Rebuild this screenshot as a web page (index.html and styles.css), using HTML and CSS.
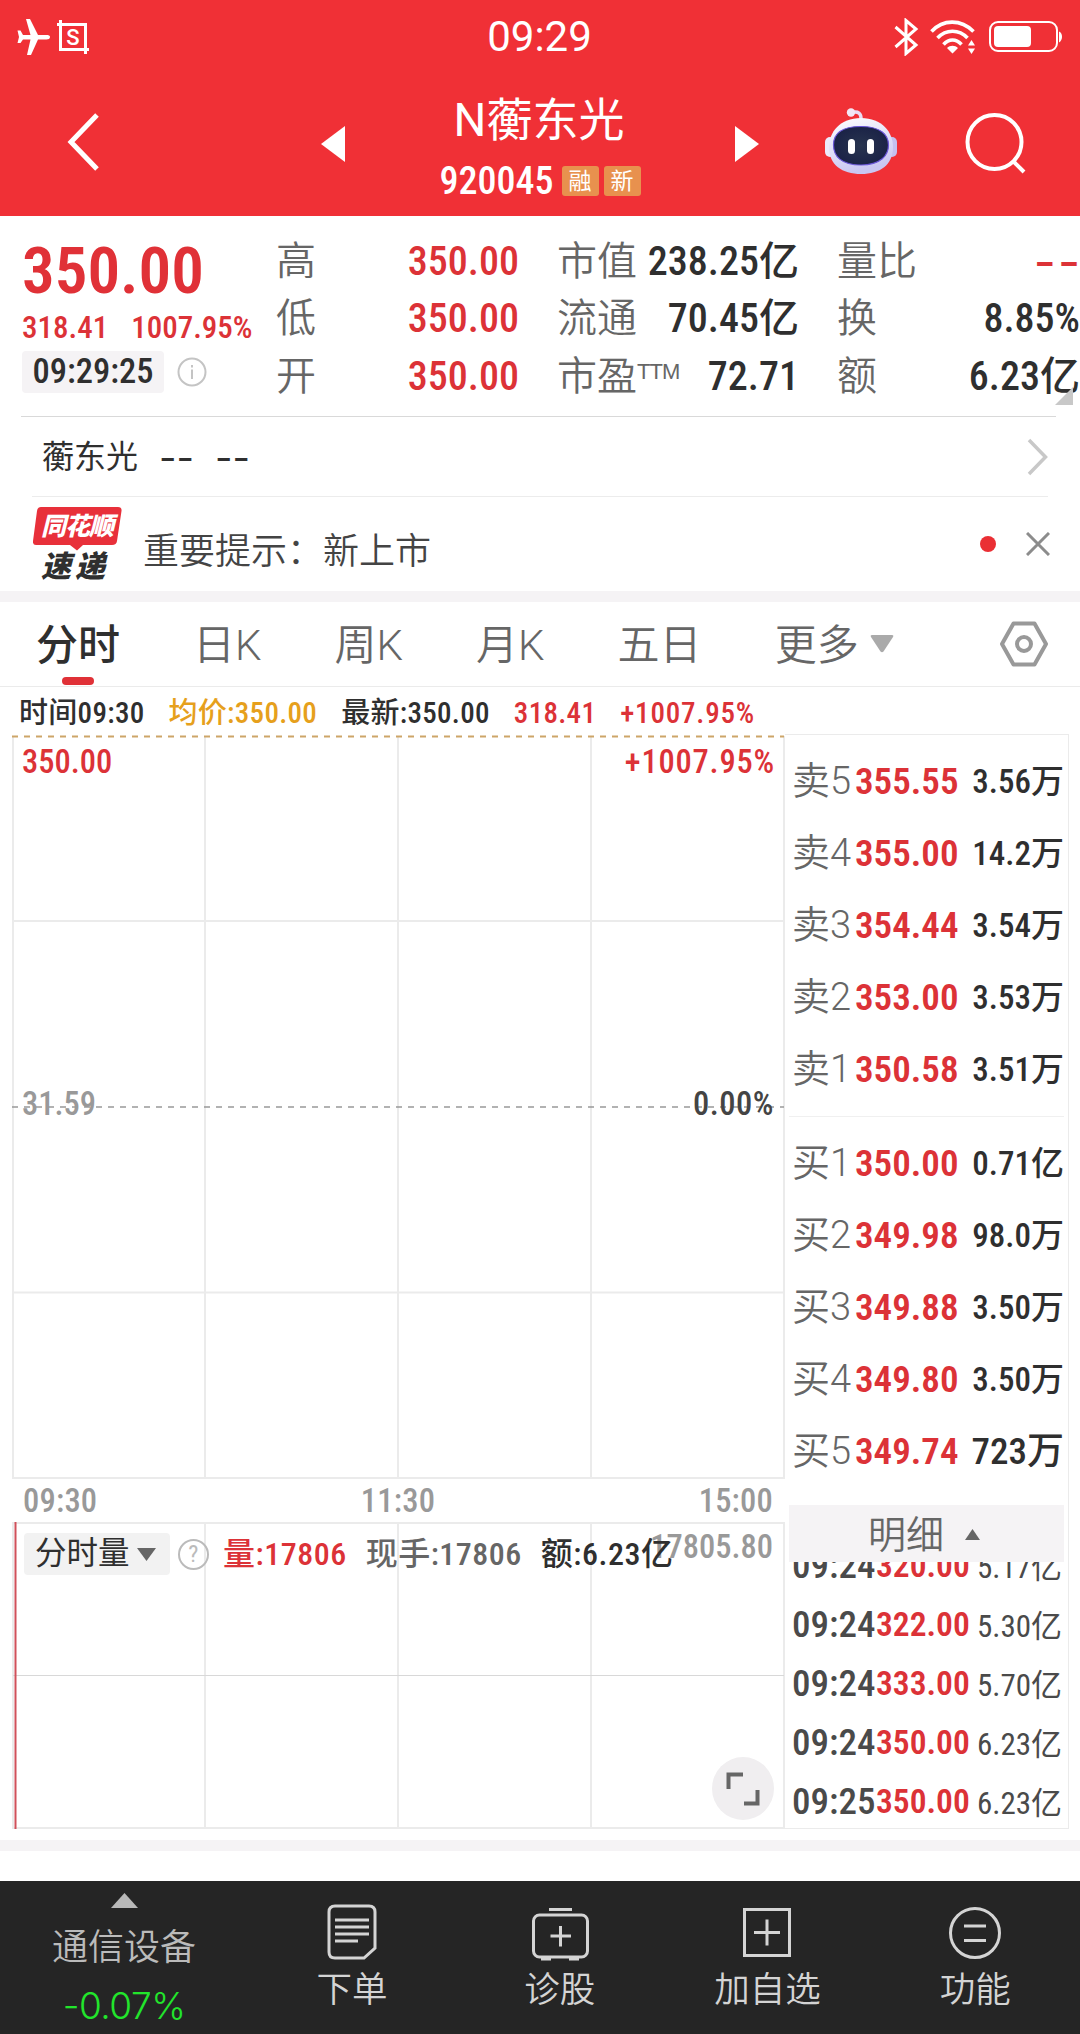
FILE: index.html
```html
<!DOCTYPE html>
<html lang="zh-CN">
<head>
    <meta charset="UTF-8">
    <meta name="viewport" content="width=device-width, initial-scale=1.0">
    <title>N蘅东光 920045</title>
    <link rel="stylesheet" href="styles.css">
</head>
<body>
    <header class="header">
        <div class="status-bar">
            <div class="status-left">
                <svg width="34" height="38" viewBox="0 0 34 38" fill="#fff">
                    <path d="M33 19c0 1.700-1.500 2.500-3.500 2.500H21L14 37h-4l3.500-15.500H6L3.500 25H0.500L2 19 0.500 12.500H3.500L6 17h7.500L9 1h4l8 16h8.500c2 0 3.500 0.500 3.500 2z"/>
                </svg>
                <svg width="32" height="34" viewBox="0 0 32 34" fill="none" stroke="#fff" stroke-width="3">
                    <path d="M0 4.500H28.500V34M3.500 0V29.500H32"/>
                    <text class="shot-letter" x="16" y="24.500" text-anchor="middle">S</text>
                </svg>
            </div>
            <div class="clock">09:29</div>
            <div class="status-right">
                <svg width="25" height="38" viewBox="0 0 25 38" fill="none" stroke="#fff" stroke-width="3">
                    <path d="M1.500 9L22 27 12 35.500V2.500L22 11 1.500 29"/>
                </svg>
                <svg class="wifi" width="48" height="36" viewBox="0 0 48 36" fill="none" stroke="#fff" stroke-width="3.600">
                    <path d="M1.500 12.500C13 0 31 0 43.500 12.500M7.500 19C16 10 29 10 37.500 19M13.500 25.500C19 19.500 26 19.500 31.500 25.500"/>
                    <path d="M17 29C20 26 25 26 28 29L22.500 34.500zM38 26.500l3.500-5.500 3.500 5.500zM38 29.500l3.500 5.500 3.500-5.500z" fill="#fff" stroke="none"/>
                </svg>
                <svg width="73" height="32" viewBox="0 0 73 32">
                    <rect x="1" y="1" width="67" height="29" rx="8" fill="none" stroke="#fff" stroke-width="2"/>
                    <rect x="5" y="5" width="37" height="21" rx="4" fill="#fff"/>
                    <path d="M70 10.500c4 1.500 4 9 0 11z" fill="#fff"/>
                </svg>
            </div>
        </div>
        <div class="title-bar">
            <svg class="back" width="32" height="58" viewBox="0 0 32 58" fill="none" stroke="#fff" stroke-width="5">
                <path d="M30 2L4 29 30 56"/>
            </svg>
            <svg class="prev" width="24" height="36" viewBox="0 0 24 36"><path d="M24 0V36L0 18z" fill="#fff"/></svg>
            <div class="stock">
                <h1>N蘅东光</h1>
                <div class="stock-code">
                    <span class="num">920045</span>
                    <span class="tag">融</span>
                    <span class="tag">新</span>
                </div>
            </div>
            <svg class="next" width="24" height="36" viewBox="0 0 24 36"><path d="M0 0V36L24 18z" fill="#fff"/></svg>
            <svg class="robot" width="72" height="68" viewBox="0 0 72 68">
                <defs>
                    <linearGradient id="shell" x1="0" y1="0" x2="0.300" y2="1">
                        <stop offset="0" stop-color="#fff"/>
                        <stop offset="1" stop-color="#c9c6f2"/>
                    </linearGradient>
                    <radialGradient id="visor">
                        <stop offset="0" stop-color="#28344f"/>
                        <stop offset="1" stop-color="#1b2347"/>
                    </radialGradient>
                </defs>
                <path d="M27 4.500C33 3 36.500 5 36 12" fill="none" stroke="#e9ddf5" stroke-width="3.500"/>
                <circle cx="26" cy="4.500" r="4.200" fill="#f3e6f5"/>
                <rect x="0" y="29" width="10" height="20" rx="5" fill="#eceafb"/>
                <rect x="62" y="29" width="10" height="20" rx="5" fill="#c5c0f0"/>
                <path d="M36 10C57 10 68 24 68 39 68 57 55 66 36 66S4 57 4 39C4 24 15 10 36 10z" fill="url(#shell)"/>
                <path d="M36 18.500C56 18.500 63.500 27 63.500 37S56 57 36 57 8.500 48 8.500 37 16 18.500 36 18.500z" fill="url(#visor)" stroke="#6a56d8" stroke-width="1.200"/>
                <rect x="23" y="31" width="7" height="15" rx="3.500" fill="#fff"/>
                <rect x="42" y="31" width="7" height="15" rx="3.500" fill="#fff"/>
            </svg>
            <svg class="search" width="62" height="62" viewBox="0 0 62 62" fill="none" stroke="#fff" stroke-width="4">
                <circle cx="29.500" cy="30" r="27"/>
                <path d="M48 49L59 60"/>
            </svg>
        </div>
    </header>

    <section class="quote">
        <div class="quote-main">
            <div class="price num">350.00</div>
            <div class="change num"><span>318.41</span><span>1007.95%</span></div>
            <div class="time-row">
                <span class="time num">09:29:25</span>
                <svg width="30" height="30" viewBox="0 0 30 30" fill="none" stroke="#c4c4c4" stroke-width="2">
                    <circle cx="15" cy="15" r="13.500"/>
                    <path d="M15 12.500V22M15 8V10.500"/>
                </svg>
            </div>
        </div>
        <dl class="stats stats-a">
            <div><dt>高</dt><dd class="num up">350.00</dd></div>
            <div><dt>低</dt><dd class="num up">350.00</dd></div>
            <div><dt>开</dt><dd class="num up">350.00</dd></div>
        </dl>
        <dl class="stats stats-b">
            <div><dt>市值</dt><dd class="num">238.25亿</dd></div>
            <div><dt>流通</dt><dd class="num">70.45亿</dd></div>
            <div><dt>市盈<small>TTM</small></dt><dd class="num">72.71</dd></div>
        </dl>
        <dl class="stats stats-c">
            <div><dt>量比</dt><dd class="up dashes">--</dd></div>
            <div><dt>换</dt><dd class="num">8.85%</dd></div>
            <div><dt>额</dt><dd class="num">6.23亿</dd></div>
        </dl>
        <svg class="corner" width="18" height="18" viewBox="0 0 18 18"><path d="M18 0V18H0z" fill="#c8c8c8"/></svg>
    </section>

    <section class="related">
        <span>蘅东光</span>
        <span class="dashes">--</span>
        <span class="dashes">--</span>
        <svg width="21" height="38" viewBox="0 0 21 38" fill="none" stroke="#c8c8c8" stroke-width="3.500"><path d="M2 2L18.500 19 2 36"/></svg>
    </section>

    <section class="notice">
        <div class="express">
            <svg width="90" height="44" viewBox="0 0 90 44"><path d="M8 0H85Q89 0 88.500 4L84 34Q83.500 38 79 38H50L44 43.500 37 38H3Q-.5 38 0 34L4 4Q4.500 0 8 0z" fill="#e8303a"/></svg>
            <span class="express-top">同花顺</span>
            <span class="express-bottom">速递</span>
        </div>
        <p>重要提示：新上市</p>
        <i class="dot"></i>
        <svg width="24" height="24" viewBox="0 0 24 24" stroke="#8c8c8c" stroke-width="3"><path d="M1 1L23 23M23 1L1 23"/></svg>
    </section>

    <nav class="tabs">
        <a class="active">分时</a>
        <a>日K</a>
        <a>周K</a>
        <a>月K</a>
        <a>五日</a>
        <a>更多</a>
        <svg class="more-arrow" width="24" height="18" viewBox="0 0 24 18"><path d="M2 0H22Q24 0 23 2L13.500 16.500Q12 18 10.500 16.500L1 2Q0 0 2 0z" fill="#aaa"/></svg>
        <svg class="settings" width="48" height="46" viewBox="0 0 48 46" fill="none" stroke="#999" stroke-width="4" stroke-linejoin="round">
            <path d="M13.500 2.500H34.500L46 23 34.500 43.500H13.500L2 23z"/>
            <circle cx="24" cy="23" r="7"/>
        </svg>
    </nav>

    <div class="legend num">
        <span>时间09:30</span>
        <span class="avg">均价:350.00</span>
        <span>最新:350.00</span>
        <span class="up">318.41</span>
        <span class="up">+1007.95%</span>
    </div>

    <main class="board">
        <div class="charts num">
            <div class="price-chart">
                <svg width="773" height="746" viewBox="0 0 773 746" fill="none" stroke="#ebebeb" stroke-width="2">
                    <path d="M1 1V743H772V1M193 1V743M386 1V743M579 1V743M1 186H772M1 557.500H772"/>
                    <path d="M0 1.500H772" stroke="#cda568" stroke-dasharray="6 6"/>
                    <path d="M0 372H772" stroke="#999" stroke-width="1.500" stroke-dasharray="6 6"/>
                </svg>
                <span class="high up">350.00</span>
                <span class="high-pct up">+1007.95%</span>
                <span class="mid">31.59</span>
                <span class="mid-pct">0.00%</span>
            </div>
            <div class="axis"><span>09:30</span><span>11:30</span><span>15:00</span></div>
            <div class="volume-chart">
                <svg width="773" height="308" viewBox="0 0 773 308" fill="none" stroke="#ebebeb" stroke-width="2">
                    <path d="M1 1V306H772V1zM193 1V306M386 1V306M579 1V306"/>
                    <path d="M1 153.500H772" stroke="#d8d8d8" stroke-width="1"/>
                    <path d="M3.500 0V307" stroke="#d0505a"/>
                </svg>
                <span class="volume-max">17805.80</span>
                <div class="volume-bar">
                    <span class="picker">分时量
                        <svg width="19" height="13" viewBox="0 0 19 13"><path d="M0 0H19L9.500 13z" fill="#666"/></svg>
                    </span>
                    <span class="help">?</span>
                    <span class="vol up">量:17806</span>
                    <span class="hand">现手:17806</span>
                    <span class="amount">额:6.23亿</span>
                </div>
                <button class="expand">
                    <svg width="34" height="34" viewBox="0 0 34 34" fill="none" stroke="#666" stroke-width="4"><path d="M2.500 17V2.500H17M31.500 18V31.500H18"/></svg>
                </button>
            </div>
        </div>

        <aside class="book">
            <ul class="orders sell">
                <li><span>卖5</span><b>355.55</b><em>3.56万</em></li>
                <li><span>卖4</span><b>355.00</b><em>14.2万</em></li>
                <li><span>卖3</span><b>354.44</b><em>3.54万</em></li>
                <li><span>卖2</span><b>353.00</b><em>3.53万</em></li>
                <li><span>卖1</span><b>350.58</b><em>3.51万</em></li>
            </ul>
            <ul class="orders buy">
                <li><span>买1</span><b>350.00</b><em>0.71亿</em></li>
                <li><span>买2</span><b>349.98</b><em>98.0万</em></li>
                <li><span>买3</span><b>349.88</b><em>3.50万</em></li>
                <li><span>买4</span><b>349.80</b><em>3.50万</em></li>
                <li><span>买5</span><b>349.74</b><em class="big">723万</em></li>
            </ul>
            <div class="detail-head">明细
                <svg width="15" height="11" viewBox="0 0 15 11"><path d="M7.500 0L15 11H0z" fill="#666"/></svg>
            </div>
            <ul class="details">
                <li><span>09:24</span><b>320.00</b><em>5.17亿</em></li>
                <li><span>09:24</span><b>322.00</b><em>5.30亿</em></li>
                <li><span>09:24</span><b>333.00</b><em>5.70亿</em></li>
                <li><span>09:24</span><b>350.00</b><em>6.23亿</em></li>
                <li><span>09:25</span><b>350.00</b><em>6.23亿</em></li>
            </ul>
        </aside>
    </main>

    <footer class="toolbar">
        <div class="sector">
            <svg width="27" height="15" viewBox="0 0 27 15"><path d="M13.500 0L27 15H0z" fill="#b8b8b8"/></svg>
            <span>通信设备</span>
            <span class="down">-0.07%</span>
        </div>
        <a>
            <svg width="52" height="58" viewBox="0 0 52 58" fill="none" stroke="#d4d4d4" stroke-width="3">
                <path d="M9 3H43Q49 3 49 9V45L38 55H9Q3 55 3 49V9Q3 3 9 3z"/>
                <path d="M9 17H43M9 24H43M9 31H43M9 38H32"/>
            </svg>
            下单
        </a>
        <a>
            <svg width="58" height="58" viewBox="0 0 58 58" fill="none" stroke="#d4d4d4" stroke-width="3">
                <path d="M18 6.500H41"/>
                <rect x="2.500" y="12" width="54" height="42" rx="6"/>
                <path d="M29.500 23V43.500M19.500 33H40"/>
                <path d="M10 55.500H20M38 55.500H48" stroke-width="4"/>
            </svg>
            诊股
        </a>
        <a>
            <svg width="50" height="58" viewBox="0 0 50 58" fill="none" stroke="#d4d4d4" stroke-width="3">
                <rect x="2.500" y="6.500" width="45" height="46"/>
                <path d="M25 16.500V42.500M12 29.500H38"/>
            </svg>
            加自选
        </a>
        <a>
            <svg width="54" height="58" viewBox="0 0 54 58" fill="none" stroke="#d4d4d4" stroke-width="3">
                <circle cx="27" cy="30" r="24.500"/>
                <path d="M16 23H38M16 37.500H38"/>
            </svg>
            功能
        </a>
    </footer>
</body>
</html>
```
FILE: styles.css
```css
/* Basic reset */
* {
    box-sizing: border-box;
    margin: 0;
    padding: 0;
}

body {
    width: 1080px;
    height: 2034px;
    display: flex;
    flex-direction: column;
    overflow: hidden;
    background: #fff;
    color: #2f2f2f;
    font-family: Roboto, "Noto Sans CJK SC", sans-serif;
    font-size: 36px;
    line-height: 1;
    white-space: nowrap;
}

svg {
    display: block;
    flex: none;
}

ul {
    list-style: none;
}

em, i {
    font-style: normal;
}

.num {
    font-family: "Roboto Condensed", "Noto Sans CJK SC", sans-serif;
    font-weight: 500;
}

.up {
    color: #dc3237;
}

.dashes {
    font-family: Inter, sans-serif;
    font-weight: 500;
}

/* Header */
.header {
    height: 216px;
    background: #f03036;
    color: #fff;
}

.status-bar {
    height: 74px;
    padding: 0 18px 0 17px;
    display: flex;
    align-items: center;
    justify-content: space-between;
}

.status-left, .status-right {
    width: 200px;
    display: flex;
    align-items: center;
    gap: 6px;
}

.status-right {
    justify-content: flex-end;
    gap: 11px;
}

.shot-letter {
    font-size: 22px;
    font-weight: 500;
    fill: #fff;
    stroke: none;
}

.clock {
    font-size: 42px;
}

.title-bar {
    height: 142px;
    padding-left: 67px;
    display: flex;
}

.back {
    margin-top: 39px;
}

.prev {
    margin: 52px 0 0 222px;
}

.next {
    margin-top: 52px;
}

.stock {
    width: 390px;
    padding-top: 22px;
    text-align: center;
}

.stock h1 {
    margin-left: -2px;
    font-size: 46px;
    font-weight: 400;
    line-height: 48px;
}

.stock-code {
    margin-top: 19px;
    display: flex;
    align-items: center;
    justify-content: center;
    font-size: 38px;
    line-height: 36px;
}

.stock-code .num {
    margin-right: 8px;
}

.tag {
    width: 37px;
    height: 30px;
    margin-right: 5px;
    border-radius: 3px;
    background: #e8914e;
    font-size: 23px;
    line-height: 31px;
}

.tag:last-child {
    margin-right: 0;
}

.robot {
    margin: 34px 0 0 66px;
}

.search {
    margin: 38px 0 0 68px;
}

/* Quote */
.quote {
    position: relative;
    height: 201px;
    display: flex;
    padding-top: 17px;
}

.quote::after {
    content: "";
    position: absolute;
    left: 21px;
    right: 24px;
    bottom: 0;
    height: 1px;
    background: #d9d9d9;
}

.quote-main {
    width: 276px;
    padding-left: 22px;
}

.price {
    margin-top: 6px;
    color: #e03137;
    font-size: 65px;
    font-weight: 600;
    line-height: 64px;
}

.change {
    margin-top: 9px;
    display: flex;
    gap: 23px;
    color: #dc3237;
    font-size: 31px;
    line-height: 32px;
}

.time-row {
    margin-top: 7px;
    display: flex;
    align-items: center;
    gap: 13px;
}

.time {
    width: 142px;
    height: 42px;
    border-radius: 4px;
    background: #f5f3f5;
    font-size: 34.500px;
    line-height: 40px;
    text-align: center;
}

.stats > div {
    height: 57.500px;
    display: flex;
    align-items: center;
    justify-content: space-between;
}

.stats dt {
    color: #666;
    font-size: 40px;
    font-weight: 350;
}

.stats dt small {
    font-size: 22px;
    font-family: "Liberation Sans", sans-serif;
    vertical-align: 11px;
    letter-spacing: -1px;
}

.stats dd {
    font-size: 40px;
}

.stats .dashes {
    font-size: 48px;
    font-weight: 400;
    letter-spacing: 2px;
    margin-right: -2px;
}

.stats-a {
    width: 243px;
}

.stats-b {
    width: 242px;
    margin-left: 38px;
}

.stats-c {
    width: 243px;
    margin-left: 38px;
}

.corner {
    position: absolute;
    right: 7px;
    bottom: 12px;
}

/* Related stock row */
.related {
    height: 80px;
    margin: 0 32px;
    padding: 0 0 0 10px;
    border-bottom: 1px solid #ececec;
    display: flex;
    align-items: center;
    font-size: 32px;
}

.related .dashes {
    margin-left: 21px;
    font-size: 38px;
    font-weight: 400;
}

.related svg {
    margin-left: auto;
}

/* Notice */
.notice {
    height: 94px;
    padding: 0 30px 0 33px;
    display: flex;
    align-items: center;
}

.express {
    position: relative;
    width: 90px;
    height: 74px;
    font-weight: 900;
    font-style: italic;
}

.express-top {
    position: absolute;
    left: 8px;
    top: 7px;
    color: #fff;
    font-size: 25px;
    letter-spacing: -1px;
}

.express-bottom {
    position: absolute;
    left: 8px;
    top: 45px;
    font-size: 30px;
    letter-spacing: 4px;
}

.notice p {
    margin: 16px auto 0 20px;
    color: #444;
    font-size: 36px;
    font-weight: 350;
}

.dot {
    width: 16px;
    height: 16px;
    margin-right: 30px;
    border-radius: 50%;
    background: #ea2f34;
}

/* Period tabs */
.tabs {
    height: 96px;
    padding: 0 32px 0 36px;
    border-top: 11px solid #f5f3f5;
    border-bottom: 1px solid #ebebeb;
    display: flex;
    align-items: center;
    color: #666;
    font-size: 42px;
    font-weight: 350;
}

.tabs a {
    position: relative;
    margin: 4px 73px 0 0;
}

.tabs .active {
    color: #2f2f2f;
    font-weight: 500;
}

.tabs .active::after {
    content: "";
    position: absolute;
    left: 26px;
    bottom: -18px;
    width: 32px;
    height: 8px;
    border-radius: 4px;
    background: #e03137;
}

.tabs a:nth-child(6) {
    margin-right: 11px;
}

.settings {
    margin-left: auto;
}

.legend {
    height: 47px;
    padding: 5px 0 0 19px;
    display: flex;
    align-items: center;
    gap: 24px;
    font-size: 29px;
    letter-spacing: 0.300px;
}

.legend .up:last-child {
    letter-spacing: 0.800px;
}

.avg {
    color: #e6a01c;
}

/* Charts and order book */
.board {
    height: 1117px;
    display: flex;
    border-bottom: 11px solid #f5f3f5;
}

.charts {
    width: 785px;
    padding: 1px 0 0 12px;
    font-size: 32.500px;
}

.price-chart {
    position: relative;
    height: 746px;
}

.price-chart span {
    position: absolute;
}

.price-chart .high {
    left: 10px;
    top: 11px;
}

.price-chart .high-pct {
    right: 10px;
    top: 11px;
    letter-spacing: 0.800px;
}

.price-chart .mid {
    left: 10px;
    top: 353px;
    color: #999;
}

.price-chart .mid-pct {
    right: 11px;
    top: 353px;
    color: #444;
    letter-spacing: 0.500px;
}

.axis {
    height: 41px;
    padding: 4px 12px 0 11px;
    display: flex;
    justify-content: space-between;
    color: #999;
    letter-spacing: 0.200px;
}

.volume-chart {
    position: relative;
    height: 308px;
}

.volume-chart > svg {
    position: absolute;
    left: 0;
    top: 0;
}

.volume-bar {
    position: relative;
    padding: 11px 0 0 12px;
    display: flex;
    align-items: center;
    font-size: 32px;
    letter-spacing: 0.500px;
}

.volume-max {
    position: absolute;
    right: 12px;
    top: 9px;
    color: #999;
}

.picker {
    width: 146px;
    height: 42px;
    padding-left: 11px;
    border-radius: 4px;
    background: #f2f2f2;
    display: flex;
    align-items: center;
    gap: 7px;
    font-size: 31.500px;
    font-weight: 400;
    letter-spacing: 0;
}

.help {
    width: 31px;
    height: 31px;
    margin-left: 8px;
    border: 2px solid #bbb;
    border-radius: 50%;
    color: #bbb;
    font-size: 24px;
    font-weight: 400;
    line-height: 27px;
    text-align: center;
}

.vol {
    margin-left: 14px;
}

.hand {
    margin-left: 19px;
    color: #666;
}

.amount {
    margin-left: 19px;
}

.expand {
    position: absolute;
    right: 11px;
    bottom: 10px;
    width: 62px;
    height: 63px;
    border: none;
    border-radius: 50%;
    background: #f0eef0;
    display: flex;
    align-items: center;
    justify-content: center;
}

.book {
    width: 284px;
    height: 1095px;
    padding: 0 4px;
    border: 1px solid #ebebeb;
    border-left: none;
    font-family: "Roboto Condensed", "Noto Sans CJK SC", sans-serif;
}

.orders li, .details li {
    display: flex;
    align-items: center;
    padding-left: 3px;
}

.orders li {
    height: 72px;
}

.orders span {
    width: 63px;
    color: #666;
    font-family: Roboto, "Noto Sans CJK SC", sans-serif;
    font-size: 38px;
    font-weight: 350;
}

.orders b {
    color: #dc3237;
    font-size: 37px;
    font-weight: 600;
}

.orders em {
    margin-left: auto;
    padding-top: 1px;
    font-size: 33px;
    font-weight: 500;
}

.orders .big {
    font-size: 37px;
}

.sell {
    height: 382px;
    padding-top: 10px;
    border-bottom: 1px solid #f0f0f0;
}

.buy {
    height: 388px;
    padding-top: 10px;
}

.detail-head {
    height: 57px;
    padding: 2px 0 0 79px;
    background: #f5f3f5;
    display: flex;
    align-items: center;
    gap: 21px;
    color: #666;
    font-size: 38px;
    font-weight: 350;
}

.details {
    height: 265px;
    overflow: hidden;
}

.details li {
    height: 59px;
}

.details li:first-child {
    margin-top: -26px;
}

.details span {
    width: 84px;
    color: #4a4a4a;
    font-size: 37px;
    font-weight: 500;
}

.details b {
    color: #dc3237;
    font-size: 33.500px;
    font-weight: 600;
}

.details em {
    margin: 0 2px 0 auto;
    padding-top: 3px;
    color: #4a4a4a;
    font-size: 31px;
    font-weight: 400;
}

/* Bottom toolbar */
.toolbar {
    height: 153px;
    margin-top: auto;
    display: flex;
    background: #252525;
    color: #d4d4d4;
    font-size: 35.500px;
    font-weight: 350;
}

.toolbar a {
    width: 207.800px;
    padding-top: 22px;
    display: flex;
    flex-direction: column;
    align-items: center;
    gap: 12px;
}

.sector {
    width: 248px;
    padding-top: 12px;
    display: flex;
    flex-direction: column;
    align-items: center;
    color: #bbb;
    font-size: 36px;
}

.sector span {
    margin-top: 22px;
}

.sector .down {
    margin-top: 21px;
    color: #22e52c;
    font-family: Inter, sans-serif;
    font-size: 37px;
    letter-spacing: -0.500px;
}
```
